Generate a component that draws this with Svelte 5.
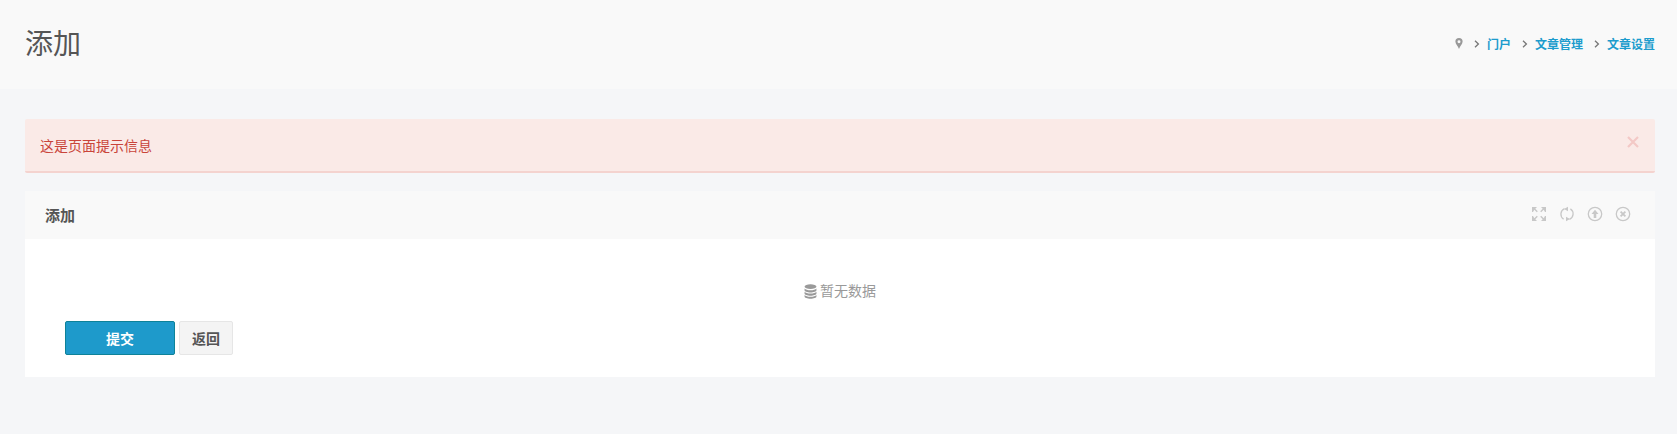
<script lang="ts">
  const crumbs = ['门户', '文章管理', '文章设置']
</script>

<div class="page">
  <header class="bar">
    <h1>添加</h1>
    <nav class="crumbs">
      <svg class="pin" viewBox="0 0 10 14" width="8" height="11">
        <path fill-rule="evenodd" d="M5 0a4.6 4.6 0 0 0-4.6 4.6C.4 7.6 3.500 10 5 14c1.500-4 4.600-6.400 4.600-9.400A4.600 4.600 0 0 0 5 0zm0 2.800a1.900 1.900 0 1 1 0 3.800 1.900 1.900 0 0 1 0-3.800z" />
      </svg>
      {#each crumbs as c}
        <svg class="sep" viewBox="0 0 6 8" width="6" height="8"><path d="M1 .8 4.400 4 1 7.200" /></svg>
        <a href="#top">{c}</a>
      {/each}
    </nav>
  </header>

  <main class="content">
    <div class="alert">
      <span>这是页面提示信息</span>
      <svg class="close" viewBox="0 0 12 12" width="12" height="12"><path d="M1 1l10 10M11 1 1 11" /></svg>
    </div>

    <section class="panel">
      <div class="panel-head">
        <h2>添加</h2>
        <div class="tools">
          <svg viewBox="0 0 16 16" width="16" height="16">
            <path class="solid" d="M1 1h5L4.300 2.700 6.800 5.200 5.800 6.200 3.300 3.700 2 6H1zM15 1v5h-1L12.700 3.700 10.200 6.200 9.200 5.200 11.700 2.700 10 1zM1 15v-5h1l1.300 2.300 2.500-2.500 1 1-2.500 2.500L6 15zM15 15h-5l1.700-1.700-2.500-2.500 1-1 2.500 2.500L14 10h1z" />
          </svg>
          <svg viewBox="0 0 16 16" width="16" height="16">
            <path d="M5.500 2.600a6 6 0 0 0-.900 10.500M10.500 13.400a6 6 0 0 0 .900-10.500" />
            <path class="solid" d="M9 .8 5 3l4 2.200zM7 15.200l4-2.200-4-2.200z" />
          </svg>
          <svg viewBox="0 0 16 16" width="16" height="16">
            <circle cx="8" cy="8" r="6.700" />
            <path class="solid" d="M8 3.800 11.500 8H9.300v4H6.700V8H4.500z" />
          </svg>
          <svg viewBox="0 0 16 16" width="16" height="16">
            <circle cx="8" cy="8" r="6.700" />
            <path class="thick" d="M5.600 5.600l4.800 4.800M10.400 5.600l-4.800 4.800" />
          </svg>
        </div>
      </div>
      <div class="panel-body">
        <p class="empty">
          <svg viewBox="0 0 14 16" width="13" height="15">
            <ellipse cx="7" cy="2.700" rx="6.400" ry="2.500" />
            <path d="M.6 4.700C1.600 6 4 6.600 7 6.600s5.400-.6 6.400-1.900v2c0 1.400-2.900 2.400-6.400 2.400S.6 8.100.6 6.700z" />
            <path d="M.6 8.200c1 1.300 3.400 1.900 6.400 1.900s5.400-.6 6.400-1.900v2c0 1.400-2.900 2.400-6.400 2.400S.6 11.600.6 10.200z" />
            <path d="M.6 11.700c1 1.300 3.400 1.900 6.400 1.900s5.400-.6 6.400-1.900v1.600c0 1.400-2.900 2.400-6.400 2.400S.6 14.700.6 13.300z" />
          </svg>
          暂无数据
        </p>
        <div class="actions">
          <button class="btn primary">提交</button>
          <button class="btn">返回</button>
        </div>
      </div>
    </section>
  </main>
</div>

<style>
  :global(body) {
    margin: 0;
    background: #f5f6f8;
    font-family: "Open Sans", "Noto Sans CJK SC", sans-serif;
  }
  .page {
    min-height: 434px;
  }
  .bar {
    height: 89px;
    background: #f9f9f9;
    padding: 0 22px 0 25px;
    display: flex;
    align-items: center;
    justify-content: space-between;
  }
  h1 {
    margin: 0;
    font-size: 28px;
    font-weight: 400;
    color: #555;
    line-height: 1;
    position: relative;
    top: -2px;
  }
  .crumbs {
    display: flex;
    align-items: center;
    font-size: 12px;
    position: relative;
    top: -1px;
  }
  .crumbs a {
    color: #1d9ccd;
    text-decoration: none;
    font-weight: 700;
    margin-right: 11px;
  }
  .crumbs a:last-child {
    margin-right: 0;
  }
  .pin {
    fill: #999;
    margin-right: 11px;
  }
  .sep {
    fill: none;
    stroke: #777;
    stroke-width: 1.300;
    margin-right: 7px;
  }
  .content {
    padding: 30px 22px 0 25px;
  }
  .alert {
    height: 52px;
    background: #faeae7;
    border-bottom: 2px solid #f4d3cf;
    border-radius: 2px;
    color: #c9443a;
    font-size: 14px;
    padding: 0 15px;
    display: flex;
    align-items: center;
    justify-content: space-between;
  }
  .close {
    fill: none;
    stroke: #f3c9c6;
    stroke-width: 2.200;
    margin-right: 1px;
    position: relative;
    top: -3px;
  }
  .panel {
    margin-top: 18px;
    background: #fff;
  }
  .panel-head {
    height: 48px;
    background: #f9f9f9;
    padding: 0 22px 0 20px;
    display: flex;
    align-items: center;
    justify-content: space-between;
  }
  h2 {
    margin: 0;
    font-size: 15px;
    font-weight: 700;
    color: #555;
    position: relative;
    top: -1px;
  }
  .tools {
    display: flex;
    gap: 12px;
    margin-right: 2px;
    position: relative;
    top: -1px;
  }
  .tools svg {
    fill: none;
    stroke: #c8c8c8;
    stroke-width: 1.300;
  }
  .tools .solid {
    fill: #c8c8c8;
    stroke: none;
  }
  .tools .thick {
    stroke-width: 1.800;
  }
  .panel-body {
    height: 138px;
    box-sizing: border-box;
    padding-top: 43px;
  }
  .empty {
    margin: 0;
    height: 18px;
    text-align: center;
    font-size: 14px;
    line-height: 18px;
    color: #999;
    display: flex;
    justify-content: center;
    align-items: center;
    gap: 3px;
  }
  .empty svg {
    fill: #999;
  }
  .actions {
    margin: 21px 0 0 40px;
    display: flex;
    gap: 4px;
  }
  .btn {
    height: 34px;
    width: 54px;
    padding: 0;
    box-sizing: border-box;
    border: 1px solid #e6e6e6;
    border-radius: 2px;
    background: #f4f4f4;
    color: #555;
    font: 700 14px "Open Sans", "Noto Sans CJK SC", sans-serif;
  }
  .primary {
    width: 110px;
    background: #1e9acb;
    border-color: #0e8299;
    color: #fff;
  }
</style>
